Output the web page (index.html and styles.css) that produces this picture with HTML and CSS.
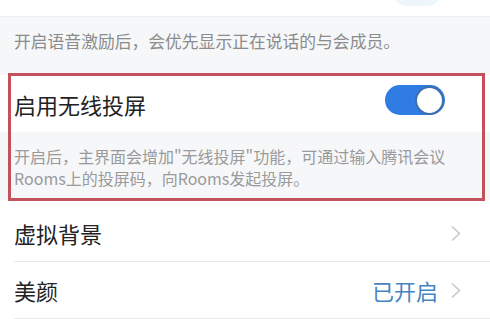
FILE: index.html
```html
<!DOCTYPE html>
<html lang="zh-CN">

<head>
    <meta charset="UTF-8">
    <meta name="viewport" content="width=device-width, initial-scale=1.0">
    <title>设置</title>
    <link rel="stylesheet" href="styles.css">
</head>

<body>
    <div class="top-row">
        <div class="prev-switch"></div>
    </div>
    <div class="tip">开启语音激励后，会优先显示正在说话的与会成员。</div>

    <div class="group">
        <div class="row">
            <span class="label">启用无线投屏</span>
            <div class="switch on"><div class="knob"></div></div>
        </div>
        <div class="desc">开启后，主界面会增加"无线投屏"功能，可通过输入腾讯会议<br>Rooms上的投屏码，向Rooms发起投屏。</div>
        <div class="mark"></div>
    </div>

    <div class="list">
        <div class="row line">
            <span class="label">虚拟背景</span>
            <svg class="chevron" width="12" height="17" viewBox="0 0 12 17"><path d="M2 1.5 L9.5 8.5 L2 15.5" fill="none" stroke="#c9c9cc" stroke-width="1.6"/></svg>
        </div>
        <div class="row line">
            <span class="label">美颜</span>
            <span class="value">已开启</span>
            <svg class="chevron" width="12" height="17" viewBox="0 0 12 17"><path d="M2 1.5 L9.5 8.5 L2 15.5" fill="none" stroke="#c9c9cc" stroke-width="1.6"/></svg>
        </div>
    </div>
</body>

</html>
```

FILE: styles.css
```css
body {
    margin: 0;
    background: #fff;
    font-family: "Noto Sans CJK SC", "Noto Sans", sans-serif;
    color: #222;
}

.top-row {
    height: 16px;
    border-bottom: 1px solid #eceef1;
    position: relative;
    overflow: hidden;
}

.prev-switch {
    position: absolute;
    left: 392px;
    top: -24px;
    width: 50px;
    height: 30px;
    border-radius: 15px;
    background: #edf6fb;
}

.tip {
    background: #f6f7f9;
    padding: 13px 14px 23px;
    font-size: 16.8px;
    line-height: 22px;
    color: #8c8c8c;
}

.group {
    position: relative;
    background: #f6f7f9;
}

.row {
    display: flex;
    align-items: center;
    height: 57px;
    padding: 0 14px;
    background: #fff;
}

.label {
    flex: 1;
    font-size: 22px;
    color: #222;
}

.switch {
    width: 60px;
    height: 30px;
    border-radius: 15px;
    background: #2f7de2;
    margin-right: 31px;
    margin-bottom: 7px;
    display: flex;
    align-items: center;
    justify-content: flex-end;
    box-sizing: border-box;
    padding: 1px;
}

.knob {
    width: 29px;
    height: 29px;
    border-radius: 50%;
    background: #fff;
    box-sizing: border-box;
    border: 2px solid #3d6fae;
}

.desc {
    padding: 13px 14px 11px;
    font-size: 16px;
    line-height: 22px;
    color: #9a9a9a;
}

.mark {
    position: absolute;
    left: 8px;
    right: 5px;
    top: -2px;
    bottom: -1px;
    border: 3px solid #c4505c;
}

.list {
    padding-top: 5px;
}

.list .row {
    height: 56px;
    padding-right: 28px;
}

.list .line {
    margin-left: 14px;
    padding-left: 0;
    border-bottom: 1px solid #e9e9eb;
}

.value {
    font-size: 22px;
    color: #4784c3;
    margin-right: 12px;
}

.chevron {
    display: block;
}
```
